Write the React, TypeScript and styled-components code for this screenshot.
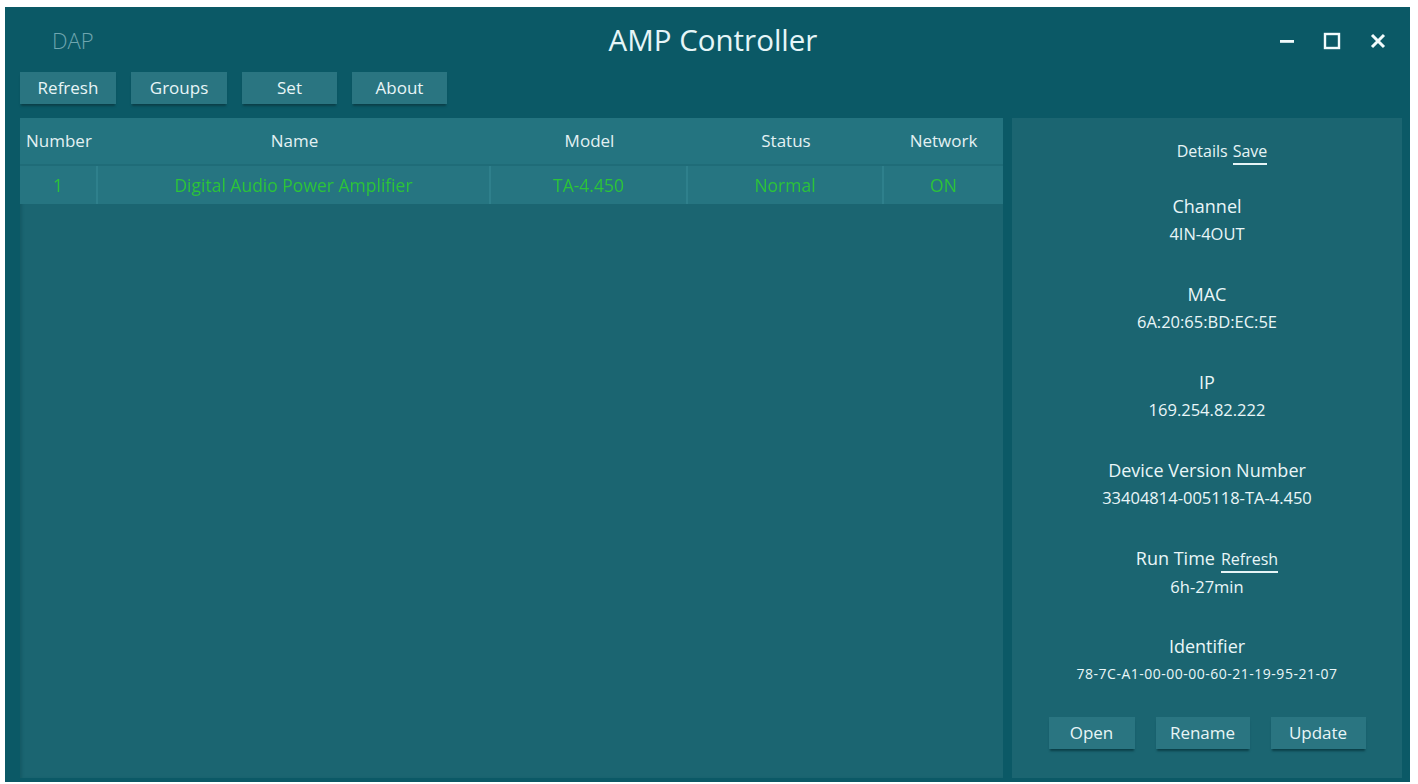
import styled, { createGlobalStyle } from 'styled-components';

const GlobalStyle = createGlobalStyle`
  html, body {
    margin: 0;
    padding: 0;
    background: #ffffff;
  }
  body {
    font-family: 'Open Sans', 'Noto Sans', sans-serif;
  }
`;

const Page = styled.div`
  width: 1418px;
  height: 784px;
  padding: 7px 8px 2px 5px;
  box-sizing: border-box;
`;

const Window = styled.div`
  height: 100%;
  background: #0b5966;
  display: flex;
  flex-direction: column;
  padding: 0 4px 4px 15px;
  box-sizing: border-box;
`;

const TitleBar = styled.div`
  height: 65px;
  display: grid;
  grid-template-columns: 1fr auto 1fr;
  align-items: center;
`;

const AppTag = styled.div`
  color: #6fa6b0;
  font-size: 22px;
  font-weight: 300;
  padding-left: 32px;
`;

const Title = styled.div`
  color: #e6f6f8;
  font-size: 29.5px;
`;

const WinControls = styled.div`
  justify-self: end;
  display: flex;
  align-items: center;
  gap: 26px;
  padding-right: 18px;
  padding-top: 2px;
  color: #f2fbfc;
`;

const Toolbar = styled.div`
  display: flex;
  gap: 15px;
  padding-bottom: 14px;
`;

const Button = styled.button<{ $w?: number }>`
  width: ${(p) => p.$w ?? 96}px;
  height: 32px;
  border: none;
  background: #2a7581;
  color: #e8f5f7;
  font-family: 'Open Sans', 'Noto Sans', sans-serif;
  font-size: 17px;
  padding: 0 0 2px;
  box-shadow: 0 3px 2px -1px #0b3f48;
  cursor: pointer;
`;

const Body = styled.div`
  flex: 1;
  display: flex;
  gap: 9px;
  min-height: 0;
`;

const TablePanel = styled.div`
  flex: 0 0 983px;
  background: #1b6571;
  display: flex;
  flex-direction: column;
  box-shadow: inset 3px 0 3px -1px #155a65;
`;

const cols = '78px 393px 197px 196px 1fr';

const HeaderRow = styled.div`
  display: grid;
  grid-template-columns: ${cols};
  height: 46px;
  align-items: center;
  background: #247480;
  border-bottom: 2px solid #1f6c78;
`;

const HeadCell = styled.div<{ $left?: boolean }>`
  color: #e3f1f3;
  font-size: 17px;
  text-align: ${(p) => (p.$left ? 'left' : 'center')};
  padding-left: ${(p) => (p.$left ? '6px' : '0')};
  padding-bottom: 2px;
`;

const DataRow = styled.div`
  display: grid;
  grid-template-columns: ${cols};
  height: 38px;
  background: #267581;
`;

const DataCell = styled.div<{ $last?: boolean }>`
  display: flex;
  align-items: center;
  justify-content: center;
  color: #2cc43a;
  font-size: 17.5px;
  filter: blur(0.7px);
  border-right: ${(p) => (p.$last ? 'none' : '2px solid #2f808c')};
`;

const DetailPanel = styled.div`
  flex: 1;
  background: #1b6571;
  display: flex;
  flex-direction: column;
  align-items: center;
  padding-top: 22px;
  margin-right: 4px;
`;

const DetailHead = styled.div`
  color: #e6f4f6;
  font-size: 16px;
  display: flex;
  gap: 5px;
  margin-bottom: 27px;
  padding-left: 30px;
`;

const LinkText = styled.span`
  border-bottom: 2px solid #e6f4f6;
  padding-bottom: 1px;
`;

const Field = styled.div`
  display: flex;
  flex-direction: column;
  align-items: center;
  height: 88px;
`;

const Label = styled.div`
  color: #e9f6f8;
  font-size: 18px;
  line-height: 28px;
  display: flex;
  gap: 6px;
  align-items: baseline;
`;

const SmallLink = styled.span`
  font-size: 16px;
  border-bottom: 2px solid #e6f4f6;
  line-height: 23px;
`;

const Value = styled.div<{ $small?: boolean }>`
  color: #e9f6f8;
  font-size: ${(p) => (p.$small ? '14px' : '16.5px')};
  letter-spacing: ${(p) => (p.$small ? '0.5px' : '0')};
  line-height: 28px;
`;

const ActionRow = styled.div`
  display: flex;
  gap: 21px;
  margin-top: -3px;
`;

const fields = [
  { label: 'Channel', value: '4IN-4OUT' },
  { label: 'MAC', value: '6A:20:65:BD:EC:5E' },
  { label: 'IP', value: '169.254.82.222' },
  { label: 'Device Version Number', value: '33404814-005118-TA-4.450' },
];

export default function App() {
  return (
    <Page>
      <GlobalStyle />
      <Window>
        <TitleBar>
          <AppTag>DAP</AppTag>
          <Title>AMP Controller</Title>
          <WinControls>
            <svg width="18" height="18" viewBox="0 0 18 18">
              <rect x="2" y="8" width="14" height="2.8" fill="currentColor" />
            </svg>
            <svg width="20" height="20" viewBox="0 0 20 20">
              <rect x="3" y="3" width="14" height="14" fill="none" stroke="currentColor" strokeWidth="2.4" />
            </svg>
            <svg width="20" height="20" viewBox="0 0 20 20">
              <path d="M4 4 L16 16 M16 4 L4 16" stroke="currentColor" strokeWidth="3" />
            </svg>
          </WinControls>
        </TitleBar>
        <Toolbar>
          <Button>Refresh</Button>
          <Button>Groups</Button>
          <Button $w={95}>Set</Button>
          <Button $w={95}>About</Button>
        </Toolbar>
        <Body>
          <TablePanel>
            <HeaderRow>
              <HeadCell $left>Number</HeadCell>
              <HeadCell>Name</HeadCell>
              <HeadCell>Model</HeadCell>
              <HeadCell>Status</HeadCell>
              <HeadCell>Network</HeadCell>
            </HeaderRow>
            <DataRow>
              <DataCell>1</DataCell>
              <DataCell>Digital Audio Power Amplifier</DataCell>
              <DataCell>TA-4.450</DataCell>
              <DataCell>Normal</DataCell>
              <DataCell $last>ON</DataCell>
            </DataRow>
          </TablePanel>
          <DetailPanel>
            <DetailHead>
              <span>Details</span>
              <LinkText>Save</LinkText>
            </DetailHead>
            {fields.map((f) => (
              <Field key={f.label}>
                <Label>{f.label}</Label>
                <Value>{f.value}</Value>
              </Field>
            ))}
            <Field>
              <Label>
                Run Time <SmallLink>Refresh</SmallLink>
              </Label>
              <Value>6h-27min</Value>
            </Field>
            <Field>
              <Label>Identifier</Label>
              <Value $small>78-7C-A1-00-00-00-60-21-19-95-21-07</Value>
            </Field>
            <ActionRow>
              <Button $w={86}>Open</Button>
              <Button $w={94}>Rename</Button>
              <Button $w={95}>Update</Button>
            </ActionRow>
          </DetailPanel>
        </Body>
      </Window>
    </Page>
  );
}
